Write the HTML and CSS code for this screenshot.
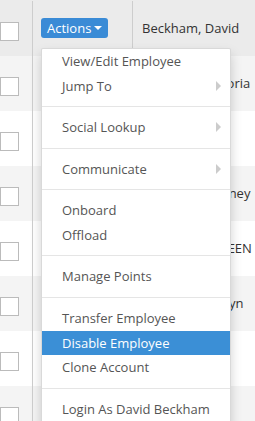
FILE: index.html
```html
<!DOCTYPE html>
<html lang="en">
<head>
    <meta charset="UTF-8">
    <meta name="viewport" content="width=device-width, initial-scale=1.0">
    <title>Employees</title>
    <link rel="stylesheet" href="styles.css">
</head>
<body>
  <div class="employee-table">
    <div class="row row-active">
        <div class="cell cell-check"><span class="checkbox"></span></div>
        <div class="cell cell-actions">
            <div class="btn-group">
                <button class="btn-actions">Actions <span class="caret"></span></button>

                <!-- Actions menu -->
                <ul class="dropdown-menu">
                    <li><a href="#">View/Edit Employee</a></li>
                    <li class="submenu"><a href="#">Jump To <span class="arrow"></span></a></li>
                    <li class="divider"></li>
                    <li class="submenu"><a href="#">Social Lookup <span class="arrow"></span></a></li>
                    <li class="divider"></li>
                    <li class="submenu"><a href="#">Communicate <span class="arrow"></span></a></li>
                    <li class="divider"></li>
                    <li><a href="#">Onboard</a></li>
                    <li><a href="#">Offload</a></li>
                    <li class="divider"></li>
                    <li><a href="#">Manage Points</a></li>
                    <li class="divider"></li>
                    <li><a href="#">Transfer Employee</a></li>
                    <li class="active"><a href="#">Disable Employee</a></li>
                    <li><a href="#">Clone Account</a></li>
                    <li class="divider"></li>
                    <li><a href="#">Login As David Beckham</a></li>
                </ul>
            </div>
        </div>
        <div class="cell cell-name">Beckham, David</div>
    </div>
    <div class="row row-alt">
        <div class="cell cell-check"><span class="checkbox"></span></div>
        <div class="cell cell-actions"><button class="btn-actions">Actions <span class="caret"></span></button></div>
        <div class="cell cell-name">Beckham, Victoria</div>
    </div>
    <div class="row">
        <div class="cell cell-check"><span class="checkbox"></span></div>
        <div class="cell cell-actions"><button class="btn-actions">Actions <span class="caret"></span></button></div>
        <div class="cell cell-name">Lee, Anna</div>
    </div>
    <div class="row row-alt">
        <div class="cell cell-check"><span class="checkbox"></span></div>
        <div class="cell cell-actions"><button class="btn-actions">Actions <span class="caret"></span></button></div>
        <div class="cell cell-name">Houston, Whitney</div>
    </div>
    <div class="row">
        <div class="cell cell-check"><span class="checkbox"></span></div>
        <div class="cell cell-actions"><button class="btn-actions">Actions <span class="caret"></span></button></div>
        <div class="cell cell-name">SMITH, KATHLEEN</div>
    </div>
    <div class="row row-alt">
        <div class="cell cell-check"><span class="checkbox"></span></div>
        <div class="cell cell-actions"><button class="btn-actions">Actions <span class="caret"></span></button></div>
        <div class="cell cell-name">Beckham, Evelyn</div>
    </div>
    <div class="row">
        <div class="cell cell-check"><span class="checkbox"></span></div>
        <div class="cell cell-actions"><button class="btn-actions">Actions <span class="caret"></span></button></div>
        <div class="cell cell-name">Adams, Tom</div>
    </div>
    <div class="row row-alt">
        <div class="cell cell-check"><span class="checkbox"></span></div>
        <div class="cell cell-actions"><button class="btn-actions">Actions <span class="caret"></span></button></div>
        <div class="cell cell-name">Brown, Ann</div>
    </div>
  </div>
</body>
</html>
```
FILE: styles.css
```css
body {
    margin: 0;
    font-family: "Open Sans", sans-serif;
    font-size: 13px;
    color: #333;
    background-color: #fff;
    overflow: hidden;
}
.employee-table {
    padding-top: 1px;
    background-color: #ebebeb;
}
.row {
    display: flex;
    height: 55px;
    background-color: #fff;
}
.row-alt {
    background-color: #f4f4f4;
}
.row-active {
    background-color: #ebebeb;
}
.cell {
    box-sizing: border-box;
}
.cell-check {
    width: 33px;
    padding-top: 21px;
    border-right: 1px solid #cdcdcd;
}
.checkbox {
    display: block;
    box-sizing: border-box;
    width: 19px;
    height: 19px;
    background: #fff;
    border: 1px solid #bbb;
}
.cell-actions {
    width: 100px;
    padding: 17px 0 0 8px;
    border-right: 1px solid #cdcdcd;
}
.cell-name {
    flex: 1;
    padding: 18px 0 0 9px;
    line-height: 18px;
    white-space: nowrap;
}
.btn-group {
    position: relative;
}
.btn-actions {
    display: flex;
    align-items: center;
    gap: 3px;
    height: 20px;
    padding: 0 6px;
    font-family: "Open Sans", sans-serif;
    font-size: 13px;
    line-height: 18px;
    color: #fff;
    background-color: #3a8bd6;
    border: none;
    border-radius: 3px;
}
.caret {
    width: 0;
    height: 0;
    border-top: 4px solid #fff;
    border-left: 4px solid transparent;
    border-right: 4px solid transparent;
}
.dropdown-menu {
    position: absolute;
    top: 30px;
    left: 0;
    z-index: 10;
    box-sizing: border-box;
    width: 190px;
    margin: 0;
    padding: 0 0 5px;
    list-style: none;
    background: #fff;
    border: 1px solid rgba(0, 0, 0, 0.15);
    border-radius: 2px;
    box-shadow: 0 6px 12px rgba(0, 0, 0, 0.175);
}
.dropdown-menu a {
    display: flex;
    justify-content: space-between;
    align-items: center;
    padding: 3px 9px 3px 20px;
    line-height: 1.42857;
    color: #555;
    text-decoration: none;
    white-space: nowrap;
}
.dropdown-menu .active a {
    color: #fff;
    background-color: #3b8fd6;
}
.divider {
    height: 1px;
    margin: 8px 0;
    background-color: #e5e5e5;
}
.arrow {
    width: 0;
    height: 0;
    border-left: 5px solid #ccc;
    border-top: 5px solid transparent;
    border-bottom: 5px solid transparent;
}
```
